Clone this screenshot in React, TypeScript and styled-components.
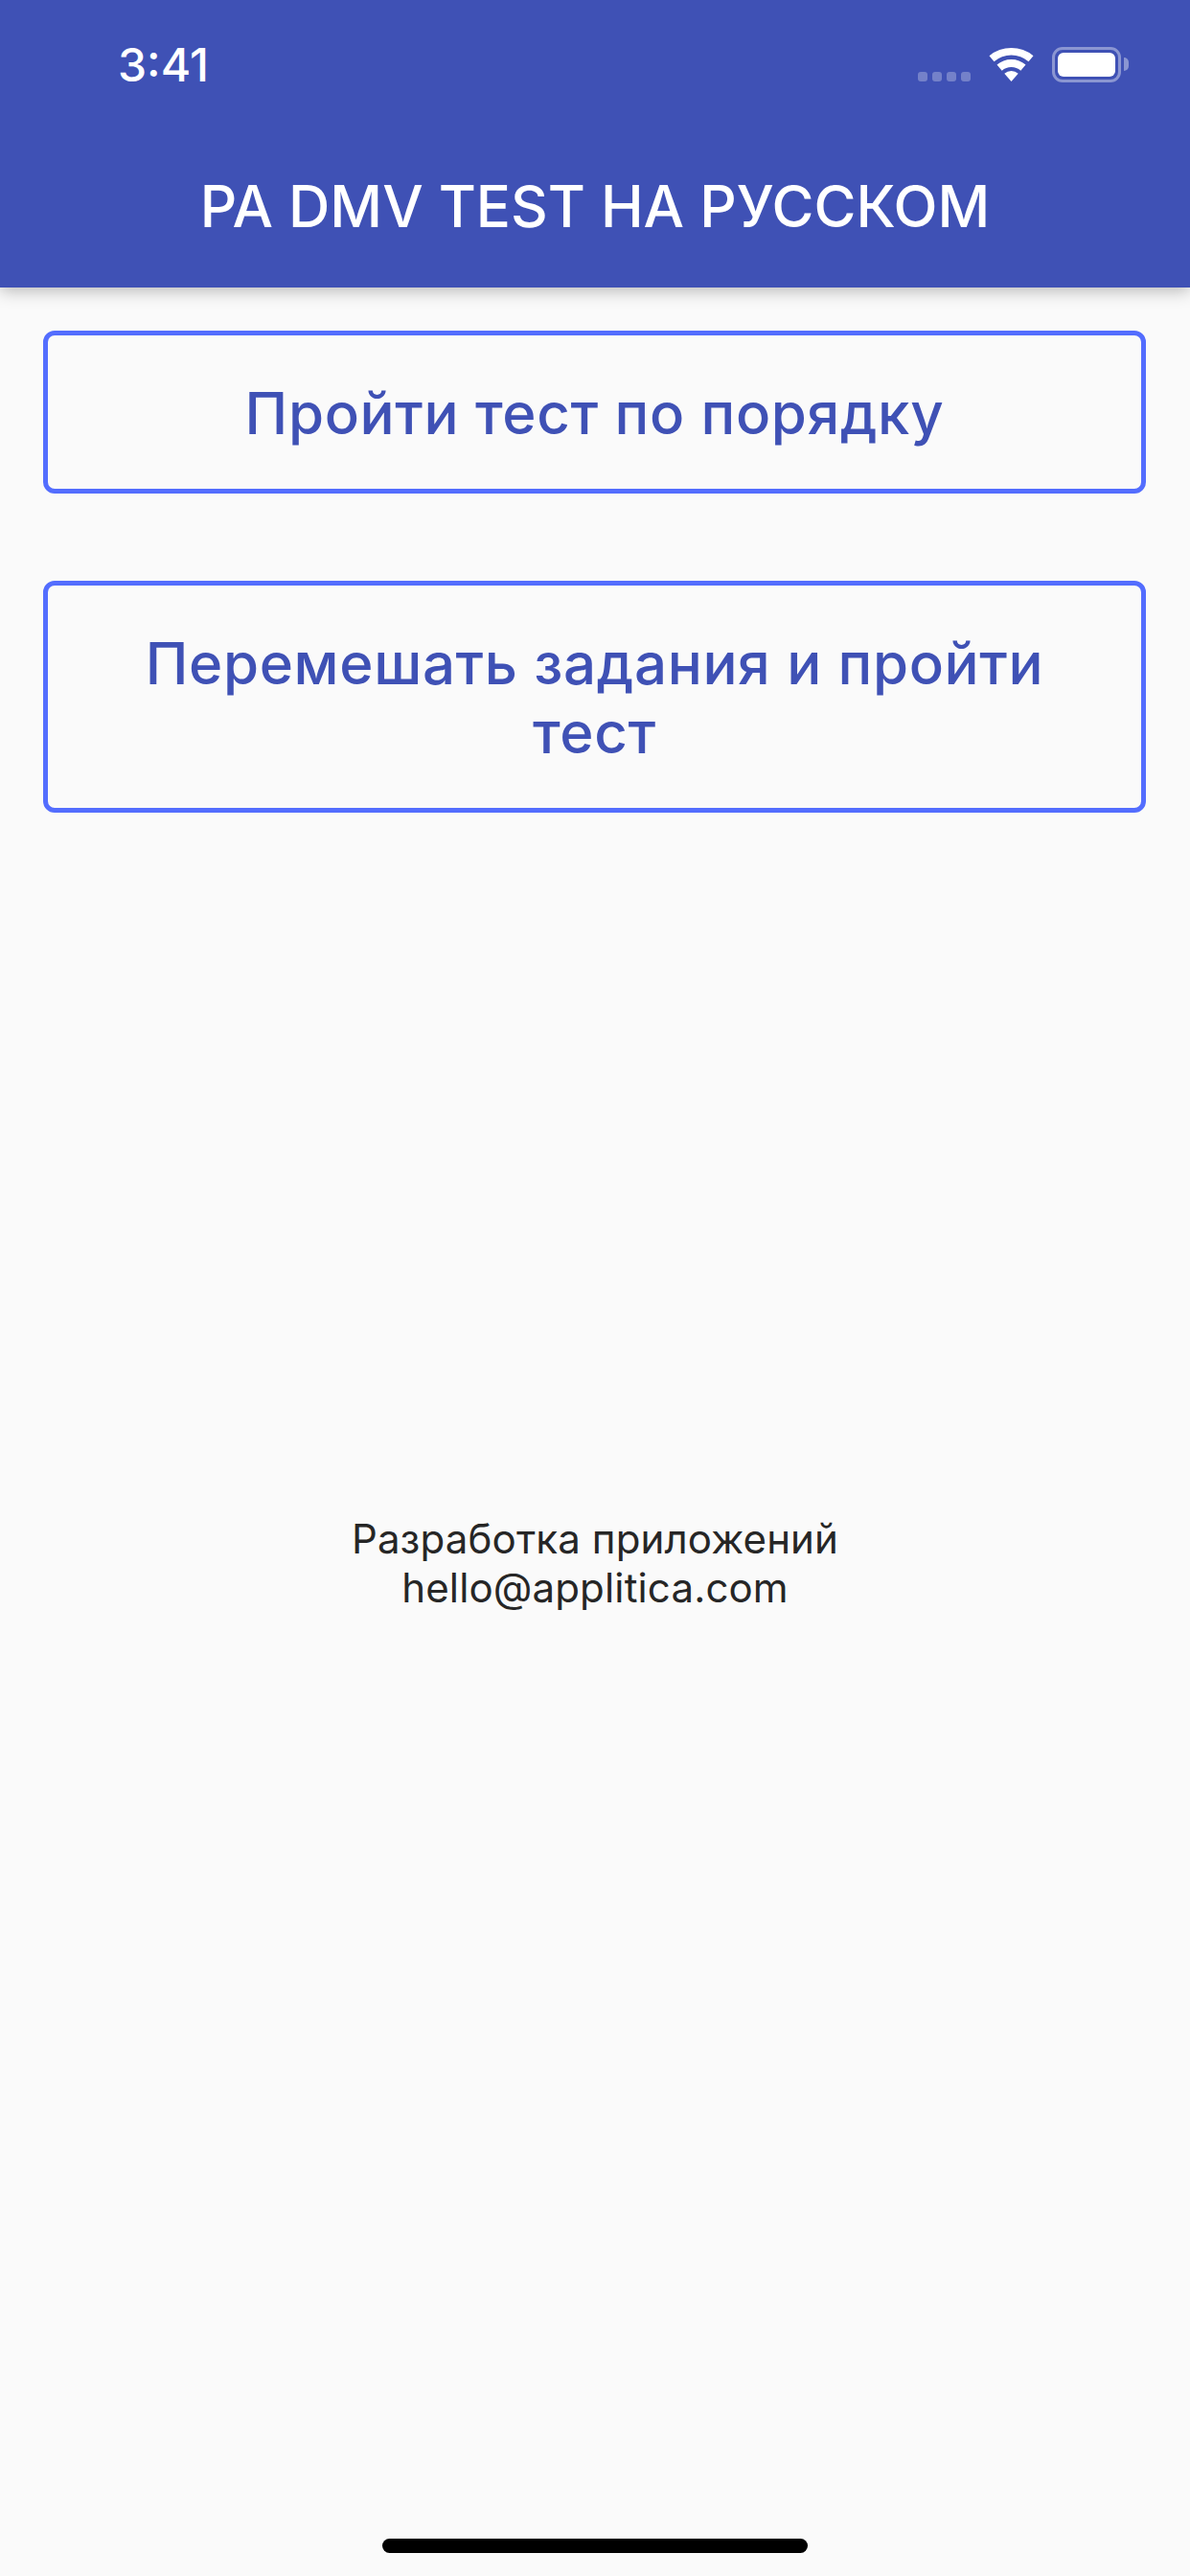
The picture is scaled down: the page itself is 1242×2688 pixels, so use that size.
import React from 'react'
import styled, { createGlobalStyle } from 'styled-components'

const GlobalStyle = createGlobalStyle`
  html, body {
    margin: 0;
    padding: 0;
    background: #fafafa;
  }
  * {
    box-sizing: border-box;
  }
`

const App: React.FunctionComponent = () => {
    return (
        <>
            <GlobalStyle />
            <Page>
                <AppBar>
                    <StatusBar>
                        <Time>3:41</Time>
                        <StatusIcons>
                            <Signal>
                                <SignalDot />
                                <SignalDot />
                                <SignalDot />
                                <SignalDot />
                            </Signal>
                            <WifiIcon />
                            <Battery>
                                <BatteryLevel />
                            </Battery>
                        </StatusIcons>
                    </StatusBar>
                    <Title>PA DMV TEST НА РУССКОМ</Title>
                </AppBar>

                <Content>
                    <OutlineButton>Пройти тест по порядку</OutlineButton>
                    <OutlineButton>Перемешать задания и пройти тест</OutlineButton>
                </Content>

                <Credits>
                    Разработка приложений
                    <br />
                    hello@applitica.com
                </Credits>

                <HomeIndicator />
            </Page>
        </>
    )
}

export default App

const WifiIcon = () => (
    <WifiSvg viewBox="0 0 47 36" width="47" height="36">
        <path d="M0.5 9.2 A36 36 0 0 1 46.5 9.2 L41.5 15.2 A27.5 27.5 0 0 0 5.5 15.2 Z" />
        <path d="M8.5 18.6 A23 23 0 0 1 38.5 18.6 L33.3 24.7 A15 15 0 0 0 13.7 24.7 Z" />
        <path d="M16.3 27.7 A11 11 0 0 1 30.7 27.7 L23.5 36 Z" />
    </WifiSvg>
)

const Page = styled.div`
  display: flex;
  flex-direction: column;
  width: 1242px;
  height: 2688px;
  overflow: hidden;
  background: #fafafa;
  font-family: Inter, "Noto Sans", sans-serif;
`

const AppBar = styled.header`
  height: 300px;
  flex: none;
  background: #3f51b5;
  color: #fff;
  box-shadow: 0 4px 16px rgba(0, 0, 0, 0.26);
`

const StatusBar = styled.div`
  display: flex;
  justify-content: space-between;
  align-items: flex-start;
  height: 132px;
  padding: 49px 72px 0 123px;
`

const Time = styled.span`
  font-size: 48px;
  line-height: 37px;
  font-weight: 500;
`

const StatusIcons = styled.div`
  display: flex;
  align-items: flex-start;
`

const Signal = styled.div`
  display: flex;
  gap: 5px;
  margin: 26px 19px 0 0;
`

const SignalDot = styled.i`
  width: 10px;
  height: 10px;
  border-radius: 3px;
  background: rgba(255, 255, 255, 0.28);
`

const WifiSvg = styled.svg`
  display: block;
  margin-right: 19px;
  fill: #fff;
`

const Battery = styled.div`
  position: relative;
  width: 72px;
  height: 37px;
  padding: 3px;
  border: 3px solid rgba(255, 255, 255, 0.4);
  border-radius: 11px;

  &::after {
    content: '';
    position: absolute;
    top: 8px;
    right: -11px;
    width: 5px;
    height: 14px;
    border-radius: 0 5px 5px 0;
    background: rgba(255, 255, 255, 0.4);
  }
`

const BatteryLevel = styled.div`
  width: 100%;
  height: 100%;
  border-radius: 6px;
  background: #fff;
`

const Title = styled.h1`
  margin: 0;
  height: 168px;
  padding-top: 23px;
  line-height: 120px;
  text-align: center;
  font-size: 60px;
  font-weight: 500;
  letter-spacing: 0;
  white-space: nowrap;
`

const Content = styled.main`
  display: flex;
  flex-direction: column;
  gap: 91px;
  padding: 45px 46px 0 45px;
`

const OutlineButton = styled.button`
  display: block;
  width: 100%;
  padding: 45px 80px 43px;
  background: transparent;
  border: 5px solid #536dfe;
  border-radius: 12px;
  color: #3f51b5;
  font-family: inherit;
  font-size: 60px;
  font-weight: 500;
  line-height: 72px;
  letter-spacing: 0.65px;
  text-align: center;
`

const Credits = styled.p`
  margin: 732px 0 0;
  text-align: center;
  color: #262626;
  font-size: 42px;
  line-height: 51px;
  font-weight: 400;
  letter-spacing: 0.15px;
`

const HomeIndicator = styled.div`
  width: 444px;
  height: 15px;
  margin: auto auto 24px;
  border-radius: 8px;
  background: #000;
`
